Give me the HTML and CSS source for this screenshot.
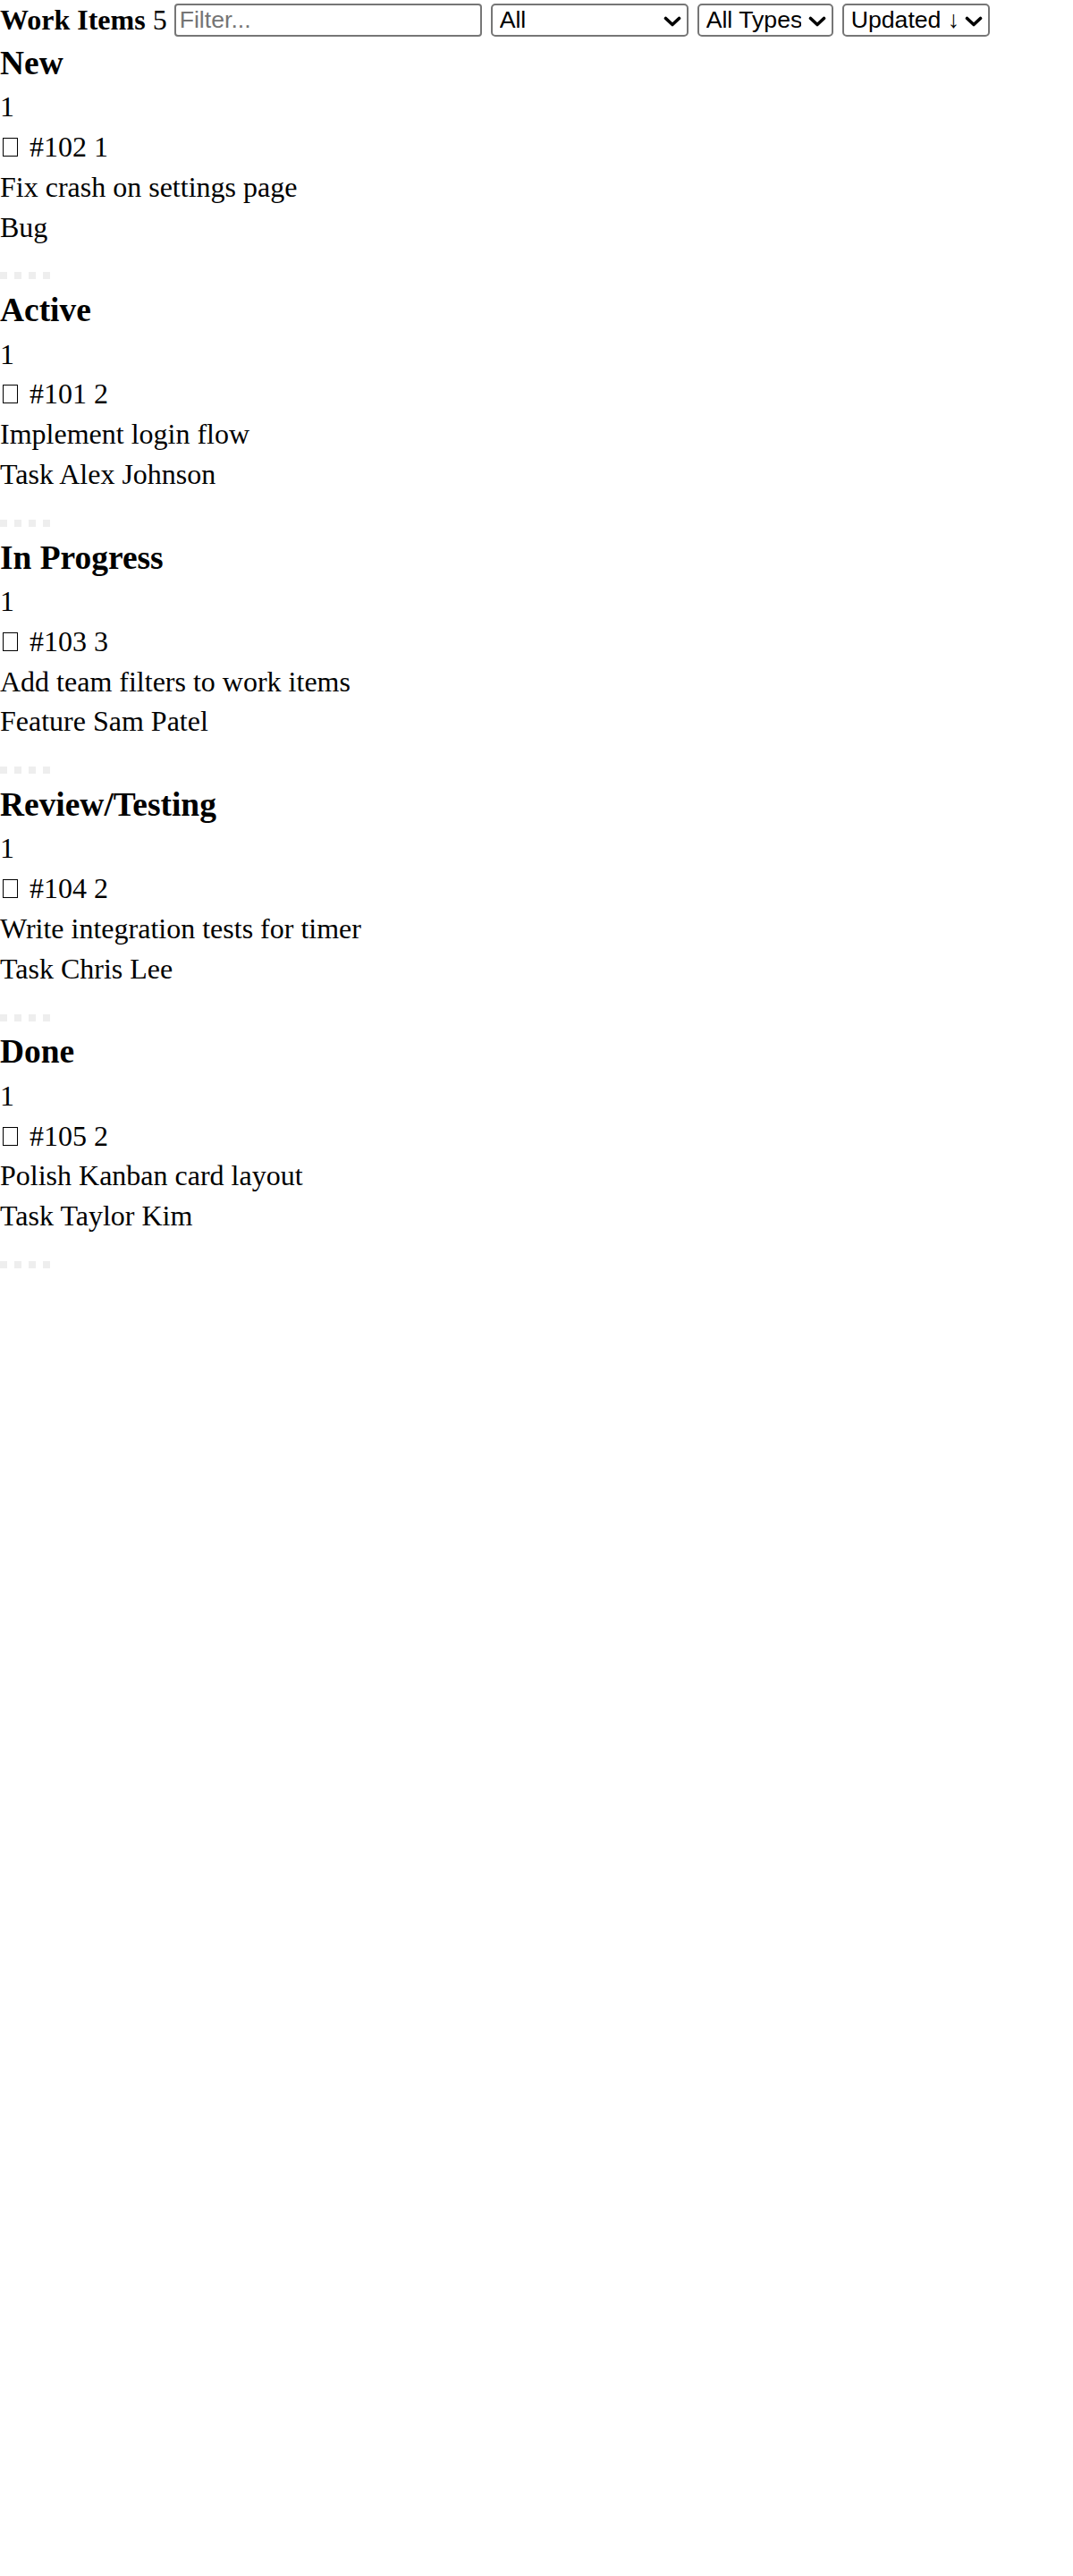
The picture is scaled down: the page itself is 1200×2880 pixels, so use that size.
FILE: index.html
```html
<!DOCTYPE html>
<html lang="en">
<head>
<meta charset="utf-8">
<title>Work Items</title>
<link rel="stylesheet" href="styles.css">
</head>
<body>
<div class="toolbar">
  <span class="heading"><strong>Work Items</strong> <span class="total">5</span></span>
  <input class="control filter" type="text" placeholder="Filter...">
  <span class="select-wrap">
    <select class="control select sel-state">
      <option>All</option>
      <option>New</option>
      <option>Active</option>
      <option>In Progress</option>
      <option>Review/Testing</option>
      <option>Done</option>
    </select>
    <svg class="chevron" viewBox="0 0 20 12" aria-hidden="true"><path d="M2.5 2.5 L10 9.5 L17.5 2.5"/></svg>
  </span>
  <span class="select-wrap">
    <select class="control select sel-type">
      <option>All Types</option>
      <option>Bug</option>
      <option>Task</option>
      <option>Feature</option>
    </select>
    <svg class="chevron" viewBox="0 0 20 12" aria-hidden="true"><path d="M2.5 2.5 L10 9.5 L17.5 2.5"/></svg>
  </span>
  <span class="select-wrap">
    <select class="control select sel-sort">
      <option>Updated ↓</option>
      <option>Updated ↑</option>
    </select>
    <svg class="chevron" viewBox="0 0 20 12" aria-hidden="true"><path d="M2.5 2.5 L10 9.5 L17.5 2.5"/></svg>
  </span>
</div>

<section class="column">
  <h3 class="col-title">New</h3>
  <div class="col-count">1</div>
  <div class="card">
    <div class="card-head"><span class="type-icon"></span> #102 1</div>
    <div class="card-title">Fix crash on settings page</div>
    <div class="card-meta">Bug</div>
    <div class="dots"><span></span><span></span><span></span><span></span></div>
  </div>
</section>

<section class="column">
  <h3 class="col-title">Active</h3>
  <div class="col-count">1</div>
  <div class="card">
    <div class="card-head"><span class="type-icon"></span> #101 2</div>
    <div class="card-title">Implement login flow</div>
    <div class="card-meta">Task Alex Johnson</div>
    <div class="dots"><span></span><span></span><span></span><span></span></div>
  </div>
</section>

<section class="column">
  <h3 class="col-title">In Progress</h3>
  <div class="col-count">1</div>
  <div class="card">
    <div class="card-head"><span class="type-icon"></span> #103 3</div>
    <div class="card-title">Add team filters to work items</div>
    <div class="card-meta">Feature Sam Patel</div>
    <div class="dots"><span></span><span></span><span></span><span></span></div>
  </div>
</section>

<section class="column">
  <h3 class="col-title">Review/Testing</h3>
  <div class="col-count">1</div>
  <div class="card">
    <div class="card-head"><span class="type-icon"></span> #104 2</div>
    <div class="card-title">Write integration tests for timer</div>
    <div class="card-meta">Task Chris Lee</div>
    <div class="dots"><span></span><span></span><span></span><span></span></div>
  </div>
</section>

<section class="column">
  <h3 class="col-title">Done</h3>
  <div class="col-count">1</div>
  <div class="card">
    <div class="card-head"><span class="type-icon"></span> #105 2</div>
    <div class="card-title">Polish Kanban card layout</div>
    <div class="card-meta">Task Taylor Kim</div>
    <div class="dots"><span></span><span></span><span></span><span></span></div>
  </div>
</section>
</body>
</html>
```

FILE: styles.css
```css
html, body {
  margin: 0;
  padding: 0;
  background: #ffffff;
}

body {
  font-family: "Liberation Serif", "Times New Roman", serif;
  font-size: 32px;
  line-height: 1.4;
  color: #000000;
}

.toolbar {
  display: flex;
  align-items: center;
  gap: 10px;
  height: 44.8px;
}

.heading {
  white-space: nowrap;
  margin-right: -2px;
}

.heading strong {
  font-weight: bold;
}

.control {
  box-sizing: border-box;
  height: 37px;
  font-family: "Liberation Sans", Arial, sans-serif;
  font-size: 26.67px;
  line-height: normal;
  color: #000000;
  background: #ffffff;
  border: 2px solid #767676;
  margin: 0;
}

.filter {
  width: 344px;
  border-radius: 4px;
  padding: 0 4px;
}

.filter::placeholder {
  color: #757575;
}

.select-wrap {
  position: relative;
  display: inline-flex;
}

.select {
  appearance: none;
  -webkit-appearance: none;
  border-radius: 5px;
  padding: 0 34px 0 8px;
}

.chevron {
  position: absolute;
  right: 8px;
  top: 14px;
  width: 20px;
  height: 12px;
  pointer-events: none;
}

.chevron path {
  fill: none;
  stroke: #000000;
  stroke-width: 3.6;
  stroke-linecap: round;
  stroke-linejoin: round;
}

.sel-state {
  width: 221px;
}

.sel-type {
  width: 152px;
}

.sel-sort {
  width: 165px;
}

.col-title {
  margin: 0;
  font-size: 37.44px;
  line-height: 1.4;
  font-weight: bold;
}

.type-icon {
  display: inline-block;
  box-sizing: border-box;
  width: 17px;
  height: 21px;
  border: 1px solid #000000;
  margin-left: 3px;
  margin-right: 5px;
}

.dots {
  box-sizing: border-box;
  height: 44.8px;
  padding-top: 28px;
  display: flex;
  align-items: flex-start;
  gap: 8px;
}

.dots span {
  display: block;
  width: 8px;
  height: 8px;
  background: #eeeeee;
}
```
